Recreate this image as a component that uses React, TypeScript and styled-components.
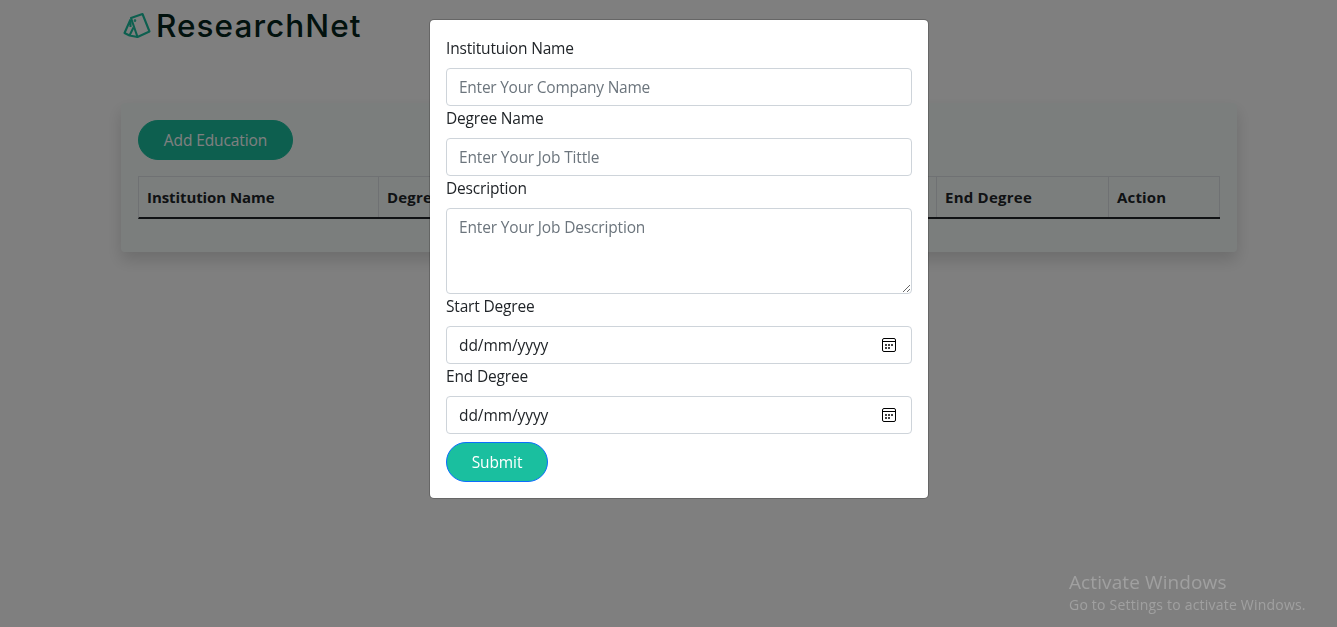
import React from "react";
import styled, { createGlobalStyle } from "styled-components";

const Global = createGlobalStyle`
  *, *::before, *::after { box-sizing: border-box; }
  body {
    margin: 0;
    background: #fff;
    color: #212529;
    font-family: "Open Sans", "Noto Sans", sans-serif;
    font-size: 15.5px;
    line-height: 24px;
    letter-spacing: -0.18px;
    overflow: hidden;
  }
`;

const Page = styled.div`
  height: 627px;
  padding: 0 100px 0 121px;
`;

const Header = styled.header`
  display: flex;
  align-items: center;
  height: 52px;
  gap: 4px;
  padding-left: 2px;
`;

const Brand = styled.span`
  font-family: Inter, sans-serif;
  font-size: 31.5px;
  font-weight: 500;
  line-height: 52px;
  letter-spacing: 1.05px;
  color: #04251c;
`;

const Card = styled.section`
  margin-top: 51px;
  height: 149px;
  padding: 17px;
  border-radius: 4px;
  background: #f7fdfb;
  box-shadow: 0 8px 16px rgba(0, 0, 0, 0.15);
`;

const Button = styled.button<{ $width: number; $border?: string }>`
  display: block;
  width: ${(p) => p.$width}px;
  height: 40px;
  padding: 0;
  border: 1px solid ${(p) => p.$border ?? "#1abf9f"};
  border-radius: 20px;
  background: #1abf9f;
  color: #fff;
  font: inherit;
  letter-spacing: -0.1px;
`;

const Table = styled.table`
  width: 1082px;
  margin-top: 16px;
  table-layout: fixed;
  border-collapse: separate;
  border-spacing: 0;
  border-left: 1px solid #dee2e6;
  border-bottom: 2px solid #212529;
`;

const Th = styled.th<{ $width: number; $spacing?: number }>`
  width: ${(p) => p.$width}px;
  height: 41px;
  padding: 0 8px;
  border-top: 1px solid #dee2e6;
  border-right: 1px solid #dee2e6;
  text-align: left;
  font-weight: 700;
  font-size: 15px;
  white-space: nowrap;
  letter-spacing: ${(p) => p.$spacing ?? 0}px;
`;

const Backdrop = styled.div`
  position: fixed;
  inset: 0;
  padding: 19px 0 0 429px;
  background: rgba(0, 0, 0, 0.5);
`;

const Modal = styled.form`
  width: 500px;
  height: 480px;
  padding: 16px;
  border: 1px solid rgba(0, 0, 0, 0.2);
  border-radius: 5px;
  background: #fff;
  background-clip: padding-box;
`;

const Label = styled.label`
  display: block;
  height: 24px;
  margin-bottom: 8px;
`;

const Input = styled.input<{ $spacing?: number }>`
  display: block;
  width: 100%;
  height: 38px;
  padding: 6px 12px;
  border: 1px solid #ced4da;
  border-radius: 4px;
  background: #fff;
  font: inherit;
  letter-spacing: ${(p) => p.$spacing ?? -0.16}px;
  &::placeholder { color: #6c757d; opacity: 1; }
`;

const TextArea = styled(Input)`
  height: 86px;
  resize: vertical;
`;

const DateField = styled.div`
  display: flex;
  align-items: center;
  justify-content: space-between;
  height: 38px;
  padding: 0 15px 0 12px;
  border: 1px solid #ced4da;
  border-radius: 4px;
  letter-spacing: -0.08px;
`;

const SubmitRow = styled.div`
  padding-top: 8px;
`;

const Watermark = styled.div`
  position: fixed;
  left: 1069px;
  top: 569px;
  color: #a0a0a0;
  white-space: nowrap;
`;

const WatermarkTitle = styled.div`
  font-size: 19px;
  line-height: 26px;
  letter-spacing: 0.1px;
`;

const WatermarkText = styled.div`
  font-size: 14px;
  line-height: 20px;
  letter-spacing: 0.21px;
`;

const Logo = () => (
  <svg width="29" height="28" viewBox="0 0 29 28" fill="none" stroke="#1abf9f" strokeWidth="2.1" strokeLinejoin="round">
    <path d="M8 6 19.5 2 26.5 19.5 14.5 25Z" />
    <path d="M7.5 7.5 1.5 21l5 2.5 4-8M6.5 23.5l8 1.5M7.5 8v7" />
    <circle cx="12" cy="8.6" r="0.5" strokeWidth="1.6" />
  </svg>
);

const CalendarIcon = () => (
  <svg width="14" height="14" viewBox="0 0 14 14" fill="none">
    <rect x="0.5" y="0.5" width="13" height="13" rx="1.5" stroke="#000" />
    <path d="M0 3.5h14" stroke="#000" />
    <path d="M3 6h2v2H3zM6 6h2v2H6zM9 6h2v2H9zM3 9h2v2H3zM6 9h2v2H6z" fill="#444" />
  </svg>
);

export default function App() {
  return (
    <>
      <Global />
      <Page>
        <Header>
          <Logo />
          <Brand>ResearchNet</Brand>
        </Header>
        <Card>
          <Button type="button" $width={155}>Add Education</Button>
          <Table>
            <thead>
              <tr>
                <Th $width={240} $spacing={-0.08}>Institution Name</Th>
                <Th $width={194} $spacing={0.2}>Degree Name</Th>
                <Th $width={184}>Description</Th>
                <Th $width={180}>Start Degree</Th>
                <Th $width={172} $spacing={0.24}>End Degree</Th>
                <Th $width={111} $spacing={0.18}>Action</Th>
              </tr>
            </thead>
          </Table>
        </Card>
      </Page>
      <Backdrop>
        <Modal>
          <Label>Institutuion Name</Label>
          <Input placeholder="Enter Your Company Name" $spacing={-0.25} />
          <Label>Degree Name</Label>
          <Input placeholder="Enter Your Job Tittle" />
          <Label>Description</Label>
          <TextArea as="textarea" placeholder="Enter Your Job Description" />
          <Label>Start Degree</Label>
          <DateField>
            <span>dd/mm/yyyy</span>
            <CalendarIcon />
          </DateField>
          <Label>End Degree</Label>
          <DateField>
            <span>dd/mm/yyyy</span>
            <CalendarIcon />
          </DateField>
          <SubmitRow>
            <Button type="button" $width={102} $border="#0d6efd">Submit</Button>
          </SubmitRow>
        </Modal>
      </Backdrop>
      <Watermark>
        <WatermarkTitle>Activate Windows</WatermarkTitle>
        <WatermarkText>Go to Settings to activate Windows.</WatermarkText>
      </Watermark>
    </>
  );
}
